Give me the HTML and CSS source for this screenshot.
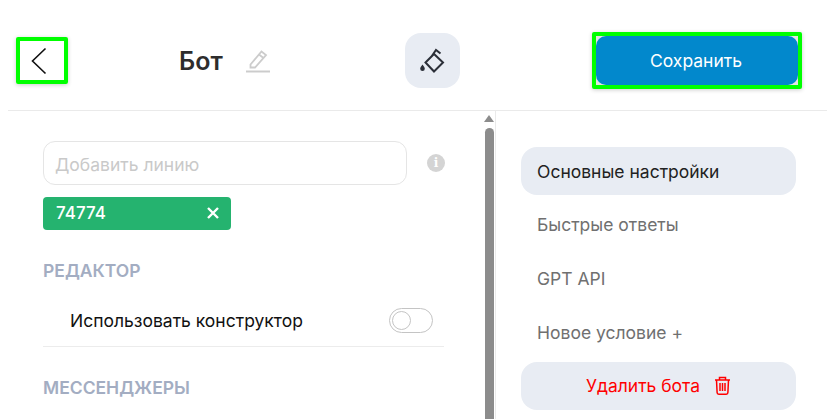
FILE: index.html
```html
<!DOCTYPE html>
<html lang="ru">
<head>
  <meta charset="UTF-8" />
  <title>Бот</title>
  <link rel="stylesheet" href="styles.css">
</head>
<body>

  <header class="top">
    <a class="back" href="#">
      <svg width="16" height="28" viewBox="0 0 16 28"><path d="M14.5 1.5 1.5 14l13 12.5" fill="none" stroke="#111" stroke-width="1.6"/></svg>
    </a>
    <div class="title">
      <h1>Бот</h1>
      <svg width="24" height="24" viewBox="0 0 24 24"><path d="M4.500 15.500 15.500 2.500l4.500 3.500L9 18.500H4.500zM13 5.500l4.500 3.500" fill="none" stroke="#ccc" stroke-width="1.800"/><path d="M0 22.500h24" stroke="#ccc" stroke-width="2"/></svg>
    </div>
    <button class="theme" type="button">
      <svg width="26" height="26" viewBox="0 0 26 26"><path d="M5.500 14.500 14 6 23 14.500 14 23.500zM11.500 8.500 16 2 20.500 5.500" fill="none" stroke="#2b2f38" stroke-width="2"/><path d="M2.500 16.500c1.200 1.700 2.300 2.800 2.300 4.200a2.300 2.300 0 0 1-4.600 0c0-1.400 1.100-2.500 2.300-4.200z" fill="#2b2f38"/></svg>
    </button>
    <button class="save" type="button"><span>Сохранить</span></button>
  </header>

  <div class="panes">
    <main class="settings">
      <div class="line-row">
        <input class="line-input" type="text" placeholder="Добавить линию" />
        <span class="info">i</span>
      </div>
      <div class="tag">
        <span>74774</span>
        <svg width="12" height="12" viewBox="0 0 12 12"><path d="M1 1l10 10M11 1 1 11" stroke="#fff" stroke-width="2.400"/></svg>
      </div>

      <h3 class="section">РЕДАКТОР</h3>
      <div class="option">
        <span>Использовать конструктор</span>
        <span class="toggle"><span class="knob"></span></span>
      </div>

      <h3 class="section">МЕССЕНДЖЕРЫ</h3>
    </main>

    <div class="scrollbar">
      <span class="arrow"></span>
      <span class="thumb"></span>
    </div>

    <nav class="side">
      <a class="item active" href="#">Основные настройки</a>
      <a class="item" href="#">Быстрые ответы</a>
      <a class="item" href="#">GPT API</a>
      <a class="item" href="#">Новое условие +</a>
      <a class="delete" href="#">
        Удалить бота
        <svg width="17" height="19" viewBox="0 0 17 19"><path d="M1 4h15M5.500 4V1.500h6V4M2.500 4l.6 12.500c0 1 .7 1.700 1.700 1.700h7.400c1 0 1.700-.7 1.700-1.700L14.500 4M6 7v8M8.500 7v8M11 7v8" fill="none" stroke="#f00" stroke-width="1.500"/></svg>
      </a>
    </nav>
  </div>

</body>
</html>
```

FILE: styles.css
```css
* {
  box-sizing: border-box;
}

html, body {
  height: 100%;
}

body {
  margin: 0;
  padding-left: 8px;
  overflow: hidden;
  background-color: #fff;
  color: #111;
  font-family: Inter, "Noto Sans", sans-serif;
  font-size: 17.5px;
}

a {
  text-decoration: none;
}

.top {
  display: flex;
  align-items: center;
  height: 111px;
  padding: 16px 25px 5px 8px;
  border-bottom: 1px solid #eaeaea;
}

.back {
  display: flex;
  align-items: center;
  width: 52px;
  height: 47px;
  padding-left: 11px;
  border: 4px solid #00ff00;
  border-radius: 2px;
  box-shadow: 0 1px 4px rgba(0, 0, 0, 0.2);
}

.title {
  display: flex;
  align-items: center;
  gap: 23px;
  width: 226px;
  margin-left: 111px;
}

.title h1 {
  margin: 0;
  font-size: 25px;
  font-weight: 600;
  color: #2d2d2d;
}

.theme {
  display: flex;
  align-items: center;
  justify-content: center;
  width: 55px;
  height: 55px;
  padding: 0;
  border: none;
  border-radius: 16px;
  background-color: #e8ecf3;
}

.save {
  width: 210px;
  height: 57px;
  margin-left: auto;
  padding: 0;
  border: 4px solid #00ff00;
  border-radius: 2px;
  background-color: #e4e4e4;
  box-shadow: 0 1px 4px rgba(0, 0, 0, 0.2);
  font: inherit;
  color: #fff;
}

.save span {
  display: flex;
  align-items: center;
  justify-content: center;
  height: 100%;
  padding-right: 2px;
  border-radius: 10px;
  background-color: #0288cc;
}

.panes {
  display: flex;
  height: 308px;
  overflow: hidden;
}

.settings {
  width: 475px;
  padding: 30px 39px 0 35px;
}

.line-row {
  display: flex;
  align-items: center;
  gap: 20px;
}

.line-input {
  flex-shrink: 0;
  width: 364px;
  height: 44px;
  padding: 2px 11px 0;
  border: 1px solid #e5e5e5;
  border-radius: 12px;
  font: inherit;
}

.line-input::placeholder {
  color: #c9c9c9;
  opacity: 1;
}

.info {
  display: flex;
  flex-shrink: 0;
  align-items: center;
  justify-content: center;
  width: 18px;
  height: 18px;
  border-radius: 50%;
  background-color: #d4d4d4;
  color: #fff;
  font-family: "DejaVu Serif", serif;
  font-size: 12px;
  font-weight: 700;
}

.tag {
  display: flex;
  align-items: center;
  justify-content: space-between;
  width: 188px;
  height: 33px;
  margin-top: 12px;
  padding: 0 12px 2px 13px;
  border-radius: 4px;
  background-color: #25b36f;
  color: #fff;
  font-size: 17px;
  font-weight: 500;
}

.section {
  margin: 29px 0 0;
  font-size: 17.5px;
  font-weight: 600;
  line-height: 24px;
  color: #a3adc2;
}

.option {
  display: flex;
  align-items: center;
  justify-content: space-between;
  height: 53px;
  margin-top: 11px;
  padding: 0 11px 0 27px;
  border-bottom: 1px solid #ececec;
}

.toggle {
  display: block;
  width: 44px;
  height: 25px;
  padding: 2px;
  border: 1px solid #c4c4c4;
  border-radius: 13px;
}

.knob {
  display: block;
  width: 19px;
  height: 19px;
  border: 1px solid #c4c4c4;
  border-radius: 50%;
}

.scrollbar {
  display: flex;
  flex-direction: column;
  align-items: center;
  width: 12px;
  padding-top: 4px;
}

.arrow {
  width: 0;
  height: 0;
  border-left: 5px solid transparent;
  border-right: 5px solid transparent;
  border-bottom: 7px solid #8c8c8c;
}

.thumb {
  flex: 1;
  width: 9px;
  margin-top: 6px;
  border-radius: 5px 5px 0 0;
  background-color: #8c8c8c;
}

.side {
  flex: 1;
  display: flex;
  flex-direction: column;
  padding: 36px 31px 0 25px;
  border-left: 1px solid #eaeaea;
}

.item {
  display: flex;
  align-items: center;
  flex-shrink: 0;
  height: 48px;
  margin-bottom: 5.7px;
  padding: 0 16px;
  border-radius: 16px;
  color: #707070;
}

.item.active {
  background-color: #e8ecf3;
  color: #222;
}

.delete {
  display: flex;
  align-items: center;
  justify-content: center;
  flex-shrink: 0;
  gap: 14px;
  height: 48px;
  border-radius: 16px;
  background-color: #e8ecf3;
  color: #f00;
}
```
